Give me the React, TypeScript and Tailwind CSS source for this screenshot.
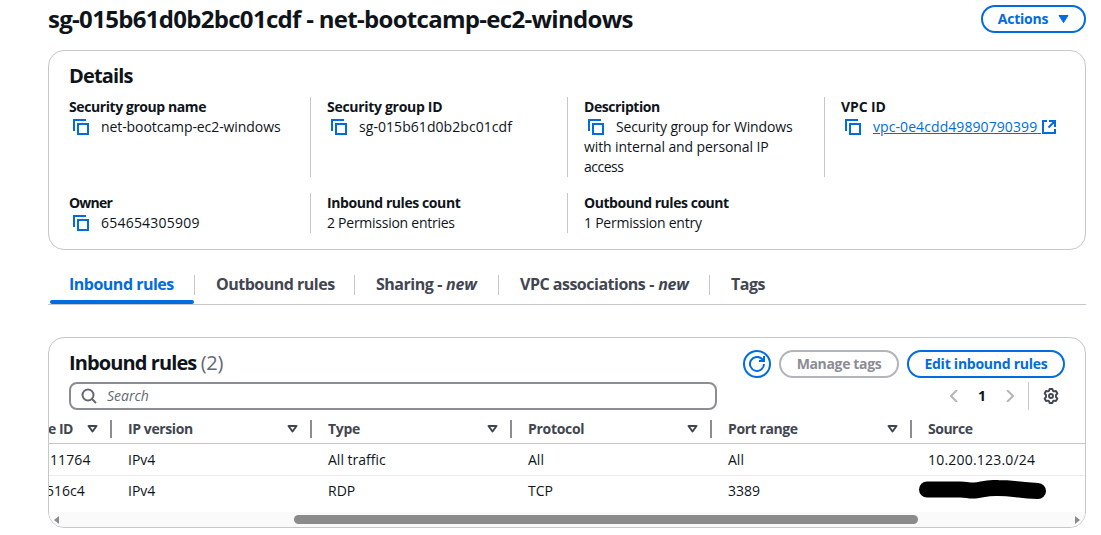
import React from "react";

const Copy = () => (
  <svg className="mx-1 inline-block size-4 shrink-0 align-[-3px]" viewBox="0 0 16 16" fill="none" stroke="#006ce0" strokeWidth="2">
    <path d="M1 12V1h12" />
    <path d="M5 5h10v10H5z" />
  </svg>
);

const External = () => (
  <svg className="ml-px h-[14px] w-[14px] shrink-0" viewBox="0 0 14 14" fill="none" stroke="#006ce0" strokeWidth="2">
    <path d="M5 1H1v12h12V9M7 1h6v6M13 1L6.500 7.500" />
  </svg>
);

const Sort = () => (
  <svg className="h-[9px] w-[11px] shrink-0" viewBox="0 0 11 9" fill="none" stroke="#424650" strokeWidth="2" strokeLinejoin="round">
    <path d="M1.500 2h8L5.500 7.500z" />
  </svg>
);

type FieldProps = { label: string; labelClass?: string; divider?: boolean; children: React.ReactNode };

const Field = ({ label, labelClass = "tracking-[-0.42px]", divider = true, children }: FieldProps) => (
  <div className={divider ? "border-l border-[#c6c6cd] pl-4" : ""}>
    <div className={`h-5 font-bold whitespace-nowrap ${labelClass}`}>{label}</div>
    <div className="whitespace-nowrap">{children}</div>
  </div>
);

const columns = [
  { name: "IP version", cells: ["IPv4", "IPv4"], tracking: "tracking-[-0.4px]" },
  { name: "Type", cells: ["All traffic", "RDP"], tracking: "tracking-[-0.3px]" },
  { name: "Protocol", cells: ["All", "TCP"], tracking: "tracking-[-0.3px]" },
  { name: "Port range", cells: ["All", "3389"], tracking: "tracking-[-0.4px]" },
];

const tabs = [
  { name: "Outbound rules", fresh: false, width: "w-[160px]" },
  { name: "Sharing", fresh: true, width: "w-[144px]" },
  { name: "VPC associations", fresh: true, width: "w-[211px]" },
  { name: "Tags", fresh: false, width: "w-[80px]" },
];

export default function App() {
  return (
    <div className="h-[535px] w-[1101px] overflow-hidden bg-white pr-[15px] pl-12 font-['Open_Sans',sans-serif] text-sm leading-5 text-[#0f141a]">
      <header className="flex h-[50px] items-start justify-between pt-[5px]">
        <h1 className="text-2xl leading-7 font-bold tracking-[-0.7px] whitespace-nowrap">sg-015b61d0b2bc01cdf - net-bootcamp-ec2-windows</h1>
        <button className="flex h-7 w-[105px] items-center justify-center gap-[10px] rounded-full border-2 border-[#006ce0] font-bold tracking-[-0.2px] text-[#006ce0]">
          Actions
          <svg className="h-2 w-[11px]" viewBox="0 0 11 8" fill="#006ce0" stroke="#006ce0" strokeLinejoin="round"><path d="M1 .5h9L5.500 7.500z" /></svg>
        </button>
      </header>

      <section className="h-[200px] rounded-2xl border border-[#c6c6cd] px-5 pt-[13px]">
        <h2 className="mb-[9px] text-xl leading-6 font-bold tracking-[-0.85px]">Details</h2>
        <div className="grid grid-cols-[241px_257px_257px_241px] gap-y-4">
          <Field label="Security group name" divider={false}><Copy /><span className="ml-2 tracking-[-0.08px]">net-bootcamp-ec2-windows</span></Field>
          <Field label="Security group ID" labelClass="tracking-[-0.3px]"><Copy /><span className="ml-2 tracking-[0.06px]">sg-015b61d0b2bc01cdf</span></Field>
          <Field label="Description"><Copy /><span className="ml-2 tracking-[-0.15px]">Security group for Windows</span><br /><span className="tracking-[-0.1px]">with internal and personal IP</span><br /><span className="tracking-[-0.5px]">access</span></Field>
          <Field label="VPC ID" labelClass="tracking-[-0.1px]"><div className="flex items-center"><Copy /><a className="ml-2 tracking-[0.08px] text-[#006ce0] underline">vpc-0e4cdd49890790399<span className="inline-block w-1 underline">&nbsp;</span></a><External /></div></Field>
          <Field label="Owner" divider={false} labelClass="tracking-[-0.8px]"><Copy /><span className="ml-2 tracking-[0.22px]">654654305909</span></Field>
          <Field label="Inbound rules count"><span className="tracking-[-0.26px]">2 Permission entries</span></Field>
          <Field label="Outbound rules count" labelClass="tracking-[-0.46px]"><span className="tracking-[-0.23px]">1 Permission entry</span></Field>
        </div>
      </section>

      <nav className="mt-[14px] flex h-[41px] border-b border-[#c6c6cd] text-base leading-5 font-bold tracking-[-0.5px] text-[#424650]">
        <div className="ml-[2px] h-10 w-36 pt-[10px] whitespace-nowrap text-[#006ce0]">
          <div className="h-[26px] pl-[19px]">Inbound rules</div>
          <div className="h-1 rounded-[2px] bg-[#006ce0]" />
        </div>
        {tabs.map((t) => (
          <div key={t.name} className={`mt-[11px] h-5 border-l border-[#c6c6cd] pl-[21px] whitespace-nowrap ${t.width}`}>
            <div className="-mt-px">
              {t.name}{t.fresh && <span className="tracking-[-0.2px]"> - <i>new</i></span>}
            </div>
          </div>
        ))}
      </nav>

      <section className="mt-8 h-[191px] overflow-hidden rounded-2xl border border-[#c6c6cd]">
        <div className="flex h-11 items-end justify-between px-5 pb-[4px]">
          <h2 className="mb-px text-xl leading-7 font-bold tracking-[-0.9px]">Inbound rules <span className="font-normal tracking-[-0.2px] text-[#656871]">(2)</span></h2>
          <div className="flex gap-2 font-bold">
            <button className="flex size-7 items-center justify-center rounded-full border-2 border-[#006ce0]">
              <svg className="size-4" viewBox="0 0 16 16" fill="none" stroke="#006ce0" strokeWidth="2"><path d="M15 8a7 7 0 1 1-2-5l2 2M15 0v5h-5" /></svg>
            </button>
            <button className="h-7 w-[120px] rounded-full border-2 border-[#b4b4bb] tracking-[-0.35px] text-[#8c8c94]">Manage tags</button>
            <button className="h-7 w-[158px] rounded-full border-2 border-[#006ce0] tracking-[-0.25px] text-[#006ce0]">Edit inbound rules</button>
          </div>
        </div>
        <div className="flex h-7 items-center px-5">
          <div className="flex h-7 w-[648px] items-center rounded-lg border-2 border-[#8c8c94] pl-[10px]">
            <svg className="size-4" viewBox="0 0 16 16" fill="none" stroke="#656871" strokeWidth="2"><circle cx="7" cy="7" r="5.500" /><path d="m11 11 4 4" /></svg>
            <i className="ml-[10px] text-[#656871]">Search</i>
          </div>
          <div className="ml-auto flex h-7 items-center">
            <svg className="h-3 w-2" viewBox="0 0 8 12" fill="none" stroke="#b4b4bb" strokeWidth="2"><path d="M7 0 1 6l6 6" /></svg>
            <b className="w-12 text-center">1</b>
            <svg className="h-3 w-2" viewBox="0 0 8 12" fill="none" stroke="#b4b4bb" strokeWidth="2"><path d="m1 0 6 6-6 6" /></svg>
            <div className="ml-[14px] h-7 w-px bg-[#c6c6cd]" />
            <svg className="mr-[6px] ml-[14px] size-4" viewBox="0 0 16 16" fill="none" stroke="#424650" strokeWidth="1.900" strokeLinejoin="round"><path d="M6.600 1h2.800l.6 1.900 1 .5 2-.4 1.400 2.400L13 7v2l1.400 1.600-1.400 2.400-2-.4-1 .5-.6 1.900H6.600L6 13.100l-1-.5-2 .4-1.400-2.400L3 9V7L1.600 5.400 3 3l2 .4 1-.5z" /><circle cx="8" cy="8" r="2" /></svg>
          </div>
        </div>
        <div className="grid grid-cols-[63px_200px_200px_200px_200px_173px] whitespace-nowrap">
          <div>
            <div className="flex h-[34px] items-center border-b border-[#c6c6cd] pt-1 font-bold text-[#424650]"><span className="-ml-px tracking-[-0.5px]">e ID</span><span className="ml-auto flex"><Sort /></span><i className="ml-3 h-[18px] w-[2px] bg-[#8c8c94]" /></div>
            <div className="h-8 border-b border-[#ebebf0] pt-[6px] pl-px tracking-[0.1px]">11764</div>
            <div className="-ml-[3px] h-9 pt-[5px]">516c4</div>
          </div>
          {columns.map((c) => (
            <div key={c.name}>
              <div className="flex h-[34px] items-center border-b border-[#c6c6cd] pt-1 pl-4 font-bold text-[#424650]"><span className={c.tracking}>{c.name}</span><span className="ml-auto flex"><Sort /></span><i className="ml-3 h-[18px] w-[2px] bg-[#8c8c94]" /></div>
              <div className="h-8 border-b border-[#ebebf0] pt-[6px] pl-4">{c.cells[0]}</div>
              <div className="h-9 pt-[5px] pl-4">{c.cells[1]}</div>
            </div>
          ))}
          <div>
            <div className="flex h-[34px] items-center border-b border-[#c6c6cd] pt-1 pl-4 font-bold tracking-[-0.5px] text-[#424650]">Source</div>
            <div className="h-8 border-b border-[#ebebf0] pt-[6px] pl-4 tracking-[0.2px]">10.200.123.0/24</div>
            <div className="h-9 pt-1 pl-[7px]">
              <svg className="h-5 w-[128px]" viewBox="0 0 128 20" fill="none" stroke="#000" strokeWidth="16" strokeLinecap="round" strokeLinejoin="round"><path d="M8 9.500h33c8 0 8 1.500 15 1 8-1 13-3 23-2.500 16 0 20 2.500 40 3" /></svg>
            </div>
          </div>
        </div>
        <div className="flex h-[15px] items-center bg-[#fafafa] px-[5px]">
          <svg className="h-2 w-[5px]" viewBox="0 0 5 8" fill="#8b8b8b"><path d="M5 0v8L0 4z" /></svg>
          <div className="ml-[235px] h-[9px] w-[624px] rounded-full bg-[#8b8b8b]" />
          <svg className="ml-auto h-2 w-[5px]" viewBox="0 0 5 8" fill="#8b8b8b"><path d="M0 0v8l5-4z" /></svg>
        </div>
      </section>
    </div>
  );
}
